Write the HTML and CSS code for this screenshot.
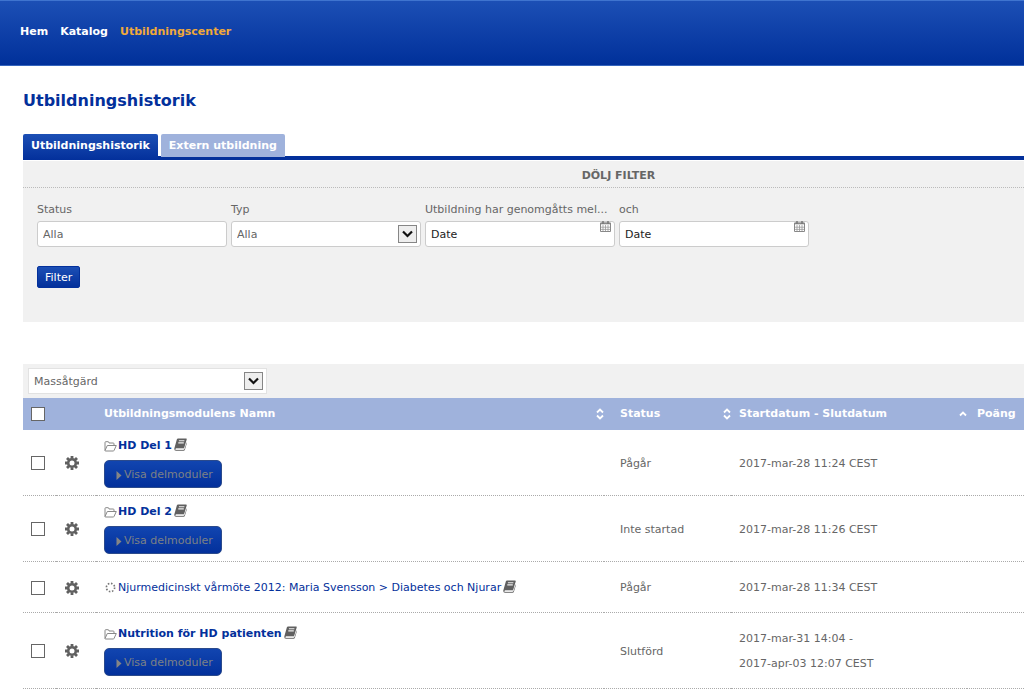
FILE: index.html
```html
<!DOCTYPE html>
<html lang="sv">
<head>
<meta charset="utf-8">
<title>Utbildningshistorik</title>
<link rel="stylesheet" href="styles.css">
</head>
<body>
<svg class="sprite" aria-hidden="true">
  <symbol id="chevron" viewBox="0 0 19 18"><rect x=".5" y=".5" width="18" height="17" fill="#eee" stroke="#868686"/><path d="M5 6.500l4.500 4.500L14 6.500" fill="none" stroke="#111" stroke-width="2.200"/></symbol>
  <symbol id="calendar" viewBox="0 0 11 11"><path d="M.5 2h10v8.500H.5z" fill="#fff" stroke="#888"/><path d="M.5 2.500h10" stroke="#888" stroke-width="1.600"/><path d="M3 0v3M8 0v3" stroke="#777" stroke-width="1.500"/><path d="M3 4v6M5.500 4v6M8 4v6M1 6.200h9M1 8.400h9" stroke="#999" stroke-width=".8"/></symbol>
  <symbol id="gear" viewBox="0 0 14 14"><circle cx="7" cy="7" r="3.800" fill="none" stroke="#606060" stroke-width="2.600"/><path d="M7 0v2.600M7 11.400V14M0 7h2.600M11.400 7H14M2 2l2 2M10 10l2 2M12 2l-2 2M4 10l-2 2" stroke="#606060" stroke-width="2.800"/></symbol>
  <symbol id="folder" viewBox="0 0 13 11"><path d="M1 9.500V1.500q0-.8.8-.8h2.400q.8 0 .8 1.300h4.200q.8 0 .8.800V4.500M1 9.500L3.300 4.500h9L10 9.500q-.2.500-.7.500H1.500Q1 10 1 9.500z" fill="#fff" stroke="#888" stroke-linejoin="round"/></symbol>
  <symbol id="book" viewBox="0 0 13 13"><path d="M4 .5h8.200q.8 0 .5.900L10.300 9.500q-.3.900-1.100.9H2.200q-1 0-.9.800.1.600.9.600H9.500q.7 0 1-.8L12.800 4v1.500l-1.900 6.200q-.3 1-1.300 1H2Q0 12.700.3 10.500L2.900 1.300Q3.200.5 4 .5z" fill="#606060"/><path d="M4.900 2.800h5.500M4.300 4.900h5.500M2 11.100h7.500" stroke="#eee" stroke-width="1.100"/></symbol>
  <symbol id="spinner" viewBox="0 0 12 12"><circle cx="6" cy="6" r="4.500" fill="none" stroke="#777" stroke-width="1.800" stroke-dasharray="1.700 1.834"/></symbol>
  <symbol id="play" viewBox="0 0 6 9"><path d="M.5 0L5.500 4.500.5 9z" fill="#858585"/></symbol>
  <symbol id="sort" viewBox="0 0 8 12"><path d="M1 4.500l3-3 3 3M1 7.500l3 3 3-3" fill="none" stroke="#fff" stroke-width="1.800"/></symbol>
  <symbol id="sort-up" viewBox="0 0 8 12"><path d="M1 7.500l3-3 3 3" fill="none" stroke="#fff" stroke-width="1.800"/></symbol>
</svg>

<header class="topbar">
  <nav class="nav">
    <a href="#">Hem</a>
    <a href="#">Katalog</a>
    <a href="#" class="current">Utbildningscenter</a>
  </nav>
</header>

<main class="content">
  <h1 class="title">Utbildningshistorik</h1>
  <div class="tabs">
    <a href="#" class="tab active">Utbildningshistorik</a>
    <a href="#" class="tab">Extern utbildning</a>
  </div>

  <form class="filters">
    <button type="button" class="toggle">DÖLJ FILTER</button>
    <div class="fields">
      <div class="field">
        <label for="status">Status</label>
        <input id="status" class="control" type="text" value="Alla">
      </div>
      <div class="field">
        <label for="type">Typ</label>
        <div class="box">
          <select id="type" class="control"><option>Alla</option></select>
          <svg class="chevron"><use href="#chevron"/></svg>
        </div>
      </div>
      <div class="field">
        <label for="from">Utbildning har genomgåtts mel...</label>
        <div class="box">
          <input id="from" class="control date" type="text" value="Date">
          <svg class="calendar"><use href="#calendar"/></svg>
        </div>
      </div>
      <div class="field">
        <label for="to">och</label>
        <div class="box">
          <input id="to" class="control date" type="text" value="Date">
          <svg class="calendar"><use href="#calendar"/></svg>
        </div>
      </div>
    </div>
    <button type="button" class="submit">Filter</button>
  </form>

  <section class="bulk">
    <div class="box bulk-box">
      <select class="control plain" aria-label="Massåtgärd"><option>Massåtgärd</option></select>
      <svg class="chevron"><use href="#chevron"/></svg>
    </div>
  </section>

  <table class="history">
    <colgroup><col class="c-check"><col class="c-gear"><col class="c-name"><col class="c-status"><col class="c-date"><col></colgroup>
    <thead>
      <tr>
        <th class="check"><input type="checkbox" aria-label="Markera alla"></th>
        <th></th>
        <th><div class="head">Utbildningsmodulens Namn<svg class="sort"><use href="#sort"/></svg></div></th>
        <th class="status"><div class="head">Status<svg class="sort"><use href="#sort"/></svg></div></th>
        <th><div class="head">Startdatum - Slutdatum<svg class="sort"><use href="#sort-up"/></svg></div></th>
        <th class="points">Poäng</th>
      </tr>
    </thead>
    <tbody>
      <tr>
        <td class="check"><input type="checkbox" aria-label="Markera HD Del 1"></td>
        <td class="tools"><button type="button" class="gear" aria-label="Inställningar"><svg><use href="#gear"/></svg></button></td>
        <td><div class="module"><svg class="folder"><use href="#folder"/></svg><a href="#" class="strong">HD Del 1</a><svg class="book"><use href="#book"/></svg></div>
          <button type="button" class="expand"><svg><use href="#play"/></svg>Visa delmoduler</button></td>
        <td class="status">Pågår</td>
        <td>2017-mar-28 11:24 CEST</td>
        <td></td>
      </tr>
      <tr>
        <td class="check"><input type="checkbox" aria-label="Markera HD Del 2"></td>
        <td class="tools"><button type="button" class="gear" aria-label="Inställningar"><svg><use href="#gear"/></svg></button></td>
        <td><div class="module"><svg class="folder"><use href="#folder"/></svg><a href="#" class="strong">HD Del 2</a><svg class="book"><use href="#book"/></svg></div>
          <button type="button" class="expand"><svg><use href="#play"/></svg>Visa delmoduler</button></td>
        <td class="status">Inte startad</td>
        <td>2017-mar-28 11:26 CEST</td>
        <td></td>
      </tr>
      <tr>
        <td class="check"><input type="checkbox" aria-label="Markera Njurmedicinskt vårmöte"></td>
        <td class="tools"><button type="button" class="gear" aria-label="Inställningar"><svg><use href="#gear"/></svg></button></td>
        <td><div class="module"><svg class="folder"><use href="#spinner"/></svg><a href="#">Njurmedicinskt vårmöte 2012: Maria Svensson &gt; Diabetes och Njurar</a><svg class="book"><use href="#book"/></svg></div></td>
        <td class="status">Pågår</td>
        <td>2017-mar-28 11:34 CEST</td>
        <td></td>
      </tr>
      <tr>
        <td class="check"><input type="checkbox" aria-label="Markera Nutrition för HD patienten"></td>
        <td class="tools"><button type="button" class="gear" aria-label="Inställningar"><svg><use href="#gear"/></svg></button></td>
        <td><div class="module"><svg class="folder"><use href="#folder"/></svg><a href="#" class="strong">Nutrition för HD patienten</a><svg class="book"><use href="#book"/></svg></div>
          <button type="button" class="expand"><svg><use href="#play"/></svg>Visa delmoduler</button></td>
        <td class="status">Slutförd</td>
        <td>2017-mar-31 14:04 -<br>2017-apr-03 12:07 CEST</td>
        <td></td>
      </tr>
    </tbody>
  </table>
</main>
</body>
</html>
```

FILE: styles.css
```css
* { box-sizing: border-box; }
body {
  margin: 0;
  background: #fff;
  color: #666;
  font: 11px/16px Verdana, "DejaVu Sans", sans-serif;
}
button, input, select { font: inherit; color: inherit; margin: 0; }
a { text-decoration: none; color: #03309b; }
svg { display: block; flex: none; }
.sprite { position: absolute; width: 0; height: 0; }

.topbar {
  padding: 23px 20px 25px;
  background: linear-gradient(#1c4fb5, #00309a);
  border-top: 1px solid #3f74cf;
  border-bottom: 1px solid #3565bd;
}
.nav { display: flex; gap: 12px; font-weight: bold; }
.nav a { color: #fff; }
.nav .current { color: #f0a93a; }

.content { padding-left: 23px; }
.title {
  margin: 0;
  padding: 25px 0 23px;
  color: #03309b;
  font-size: 16px;
  line-height: 20px;
}

.tabs {
  display: flex;
  align-items: flex-start;
  gap: 3px;
  background: linear-gradient(#fff, #fff) top / 100% 22px no-repeat #03309b;
}
.tab {
  padding: 4px 8px 3px;
  border-radius: 2px 2px 0 0;
  background: #9fb2dc;
  color: #fff;
  font-weight: bold;
}
.tab.active { padding-bottom: 6px; background: linear-gradient(#1c4fb5, #03309b); }

.filters {
  margin-top: 1px;
  padding-bottom: 34px;
  background: #f1f1f1;
}
.toggle {
  display: block;
  width: 100%;
  padding: 7px 0 3px 190px;
  border: 0;
  border-bottom: 1px dotted #bbb;
  background: none;
  font-weight: bold;
  line-height: 16px;
}
.fields { display: flex; gap: 4px; padding: 14px 14px 19px; }
.field { width: 190px; white-space: nowrap; }
.field label { display: block; margin-bottom: 3px; }
.box { position: relative; }
.control {
  display: block;
  width: 100%;
  height: 26px;
  padding: 0 5px;
  border: 1px solid #ccc;
  border-radius: 3px;
  background: #fff;
  appearance: none;
}
select.control { padding: 1px 5px 0; }
.control.date { color: #222; }
.control.plain { border-color: #e2e2e2; border-radius: 0; }
.chevron { position: absolute; right: 4px; top: 4px; width: 19px; height: 18px; pointer-events: none; }
.calendar { position: absolute; right: 4px; top: 0; width: 11px; height: 11px; }
.submit {
  margin-left: 14px;
  padding: 3px 7px 1px;
  border: 1px solid #03309b;
  border-radius: 2px;
  background: linear-gradient(#1c4fb5, #03309b);
  color: #fff;
  line-height: 16px;
}

.bulk { margin-top: 42px; padding: 4px 5px; background: #f1f1f1; }
.bulk-box { width: 239px; }

.history { width: 100%; table-layout: fixed; border-collapse: separate; border-spacing: 0; }
.c-check { width: 33px; }
.c-gear { width: 40px; }
.c-name { width: 508px; }
.c-status { width: 127px; }
.c-date { width: 236px; }
th { height: 32px; padding: 0 0 0 8px; background: #9fb2dc; color: #fff; text-align: left; }
td { padding: 8px 0 7px 8px; border-bottom: 1px dotted #aaa; line-height: 25px; }
tbody tr { height: 51px; }
tbody tr:last-child td { padding-top: 13px; padding-bottom: 12px; }
.history .status { padding-left: 16px; }
.history .points { padding-left: 10px; }
.history .tools { padding-left: 9px; }
.head { display: flex; align-items: center; justify-content: space-between; }
.sort { width: 8px; height: 12px; }
.check input {
  display: block;
  width: 14px;
  height: 14px;
  border: 1px solid #666;
  background: #fff;
  appearance: none;
}
.gear { display: block; padding: 0; border: 0; background: none; }
.gear svg { width: 14px; height: 14px; }
.module { display: flex; gap: 2px; line-height: 16px; }
.folder { align-self: center; width: 13px; height: 11px; margin-right: -1px; }
.book { width: 13px; height: 13px; }
.strong { font-weight: bold; }
.expand {
  display: flex;
  align-items: center;
  gap: 2px;
  margin-top: 6px;
  padding: 6px 8px 4px 11px;
  border: 1px solid #2b4a8c;
  border-radius: 5px;
  background: linear-gradient(#1145b0, #03309b);
  color: #7d8185;
  line-height: 16px;
}
.expand svg { width: 6px; height: 9px; }
```
